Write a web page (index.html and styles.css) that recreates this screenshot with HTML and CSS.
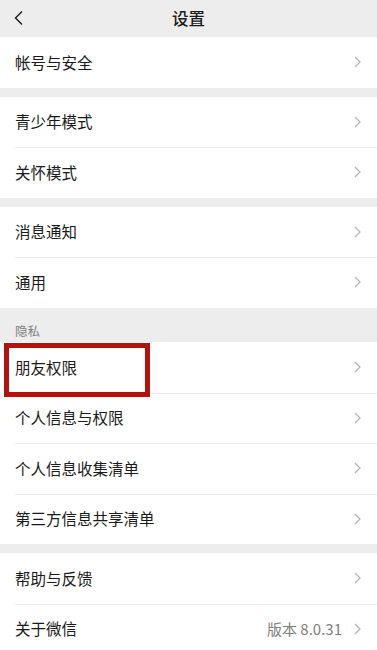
FILE: index.html
```html
<!DOCTYPE html>
<html lang="zh-CN">
<head>
<meta charset="utf-8">
<link rel="stylesheet" href="styles.css">
</head>
<body>
<div class="page">
  <header class="topbar">
    <svg class="back" width="12" height="16" viewBox="0 0 12 16"><polyline points="9,1.5 2.5,8 9,14.5" fill="none" stroke="#1a1a1a" stroke-width="1.4"/></svg>
    <div class="title">设置</div>
  </header>

  <section class="group">
    <div class="row"><span class="label">帐号与安全</span><svg class="chev" width="7" height="12" viewBox="0 0 7 12"><polyline points="1,1 6,6 1,11" fill="none" stroke="#b2b2b2" stroke-width="1.2"/></svg></div>
  </section>

  <section class="group">
    <div class="row"><span class="label">青少年模式</span><svg class="chev" width="7" height="12" viewBox="0 0 7 12"><polyline points="1,1 6,6 1,11" fill="none" stroke="#b2b2b2" stroke-width="1.2"/></svg></div>
    <div class="row"><span class="label">关怀模式</span><svg class="chev" width="7" height="12" viewBox="0 0 7 12"><polyline points="1,1 6,6 1,11" fill="none" stroke="#b2b2b2" stroke-width="1.2"/></svg></div>
  </section>

  <section class="group">
    <div class="row"><span class="label">消息通知</span><svg class="chev" width="7" height="12" viewBox="0 0 7 12"><polyline points="1,1 6,6 1,11" fill="none" stroke="#b2b2b2" stroke-width="1.2"/></svg></div>
    <div class="row"><span class="label">通用</span><svg class="chev" width="7" height="12" viewBox="0 0 7 12"><polyline points="1,1 6,6 1,11" fill="none" stroke="#b2b2b2" stroke-width="1.2"/></svg></div>
  </section>

  <div class="section-title">隐私</div>
  <section class="group">
    <div class="row highlight"><span class="label">朋友权限</span><svg class="chev" width="7" height="12" viewBox="0 0 7 12"><polyline points="1,1 6,6 1,11" fill="none" stroke="#b2b2b2" stroke-width="1.2"/></svg><span class="redbox"></span></div>
    <div class="row"><span class="label">个人信息与权限</span><svg class="chev" width="7" height="12" viewBox="0 0 7 12"><polyline points="1,1 6,6 1,11" fill="none" stroke="#b2b2b2" stroke-width="1.2"/></svg></div>
    <div class="row"><span class="label">个人信息收集清单</span><svg class="chev" width="7" height="12" viewBox="0 0 7 12"><polyline points="1,1 6,6 1,11" fill="none" stroke="#b2b2b2" stroke-width="1.2"/></svg></div>
    <div class="row"><span class="label">第三方信息共享清单</span><svg class="chev" width="7" height="12" viewBox="0 0 7 12"><polyline points="1,1 6,6 1,11" fill="none" stroke="#b2b2b2" stroke-width="1.2"/></svg></div>
  </section>

  <section class="group">
    <div class="row"><span class="label">帮助与反馈</span><svg class="chev" width="7" height="12" viewBox="0 0 7 12"><polyline points="1,1 6,6 1,11" fill="none" stroke="#b2b2b2" stroke-width="1.2"/></svg></div>
    <div class="row"><span class="label">关于微信</span><span class="value">版本 8.0.31</span><svg class="chev" width="7" height="12" viewBox="0 0 7 12"><polyline points="1,1 6,6 1,11" fill="none" stroke="#b2b2b2" stroke-width="1.2"/></svg></div>
  </section>
</div>
</body>
</html>
```

FILE: styles.css
```css
* { box-sizing: border-box; }
html, body {
  margin: 0;
  padding: 0;
  background: #ededed;
  font-family: "Noto Sans CJK SC", "Noto Sans", sans-serif;
  color: #1a1a1a;
}
.page {
  width: 377px;
  height: 650px;
  overflow: hidden;
  display: flex;
  flex-direction: column;
}
.topbar {
  height: 37px;
  flex: none;
  display: flex;
  align-items: center;
  justify-content: center;
  position: relative;
  background: #ededed;
}
.back {
  position: absolute;
  left: 13px;
  top: 10px;
}
.title {
  font-size: 16.5px;
  font-weight: 500;
  line-height: 1;
  margin-top: -1px;
}
.group {
  background: #fff;
  flex: none;
  margin-bottom: 9px;
}
.row {
  height: 50.5px;
  display: flex;
  align-items: center;
  padding: 0 16px 0 15px;
  position: relative;
}
.row + .row::before {
  content: "";
  position: absolute;
  left: 15px;
  right: 0;
  top: 0;
  height: 1px;
  background: #ececec;
}
.row.highlight { z-index: 2; }
.label {
  font-size: 15.5px;
  flex: 1;
  line-height: 1;
}
.value {
  font-size: 15px;
  color: #7f7f7f;
  margin-right: 12px;
  line-height: 1;
}
.chev { flex: none; }
.section-title {
  height: 25.5px;
  flex: none;
  margin-top: 0;
  padding: 8px 0 0 15px;
  font-size: 12.5px;
  color: #808080;
  line-height: 1;
}
.redbox {
  position: absolute;
  left: 4px;
  top: 1px;
  width: 146px;
  height: 54px;
  border: 5px solid #b5120c;
  pointer-events: none;
}
```
